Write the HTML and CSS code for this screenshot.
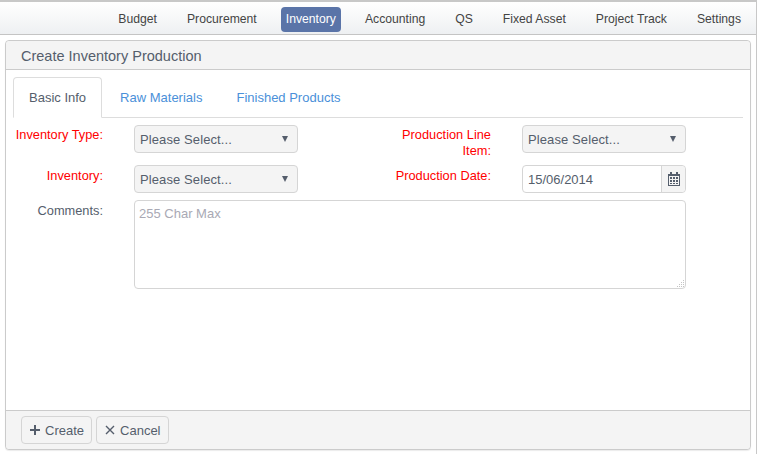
FILE: index.html
```html
<!DOCTYPE html>
<html lang="en">
<head>
  <meta charset="UTF-8">
  <title>Create Inventory Production</title>
  <link rel="stylesheet" href="styles.css">
</head>
<body>
  <nav class="topnav">
    <a href="#">Budget</a>
    <a href="#">Procurement</a>
    <a href="#" class="active">Inventory</a>
    <a href="#">Accounting</a>
    <a href="#">QS</a>
    <a href="#">Fixed Asset</a>
    <a href="#">Project Track</a>
    <a href="#">Settings</a>
  </nav>

  <section class="panel">
    <h1 class="panel-title">Create Inventory Production</h1>

    <div class="panel-body">
      <ul class="tabs">
        <li class="tab current">Basic Info</li>
        <li class="tab">Raw Materials</li>
        <li class="tab">Finished Products</li>
      </ul>

      <form class="fields">
        <label class="field-label required first">Inventory Type:</label>
        <div class="select"><span>Please Select...</span><i class="caret"></i></div>
        <label class="field-label required wide first">Production Line Item:</label>
        <div class="select"><span>Please Select...</span><i class="caret"></i></div>

        <label class="field-label required">Inventory:</label>
        <div class="select"><span>Please Select...</span><i class="caret"></i></div>
        <label class="field-label required wide">Production Date:</label>
        <div class="date">
          <span class="date-value">15/06/2014</span>
          <span class="date-btn">
            <svg width="12" height="14" viewBox="0 0 12 14">
              <path fill="#555e6c" fill-rule="evenodd" d="M2 0h2v2h4V0h2v2h2v12H0V2h2zM1 4v9h10V4zM2 5h2v2H2zm3 0h2v2H5zm3 0h2v2H8zM2 8h2v2H2zm3 0h2v2H5zm3 0h2v2H8zM2 11h2v1H2zm3 0h2v1H5zm3 0h2v1H8z"/>
            </svg>
          </span>
        </div>

        <label class="field-label comments">Comments:</label>
        <div class="textarea">
          255 Char Max
          <svg class="grip" width="8" height="8" viewBox="0 0 8 8">
            <path fill="#c4c4c4" d="M6 0h1v1H6zM4 2h1v1H4zM6 2h1v1H6zM2 4h1v1H2zM4 4h1v1H4zM6 4h1v1H6zM0 6h1v1H0zM2 6h1v1H2zM4 6h1v1H4zM6 6h1v1H6z"/>
          </svg>
        </div>
      </form>
    </div>

    <footer class="panel-footer">
      <button type="button" class="btn">
        <svg width="10" height="10" viewBox="0 0 10 10"><path fill="#555e6c" d="M4 0h2v4h4v2H6v4H4V6H0V4h4z"/></svg>
        Create
      </button>
      <button type="button" class="btn">
        <svg width="10" height="10" viewBox="0 0 10 10"><path stroke="#555e6c" stroke-width="1.400" fill="none" d="M1 1l8 8M9 1l-8 8"/></svg>
        Cancel
      </button>
    </footer>
  </section>
</body>
</html>
```

FILE: styles.css
```css
* {
  box-sizing: border-box;
}

html,
body {
  height: 100%;
}

body {
  margin: 0;
  font-family: "Liberation Sans", Arial, sans-serif;
  font-size: 13px;
  color: #555e6c;
  background-color: #fff;
  border-right: 1px solid #c8c8c8;
  overflow: hidden;
}

.topnav {
  display: flex;
  justify-content: flex-end;
  align-items: center;
  height: 35px;
  padding: 3px 9px 0 0;
  font-size: 12.200px;
  background: linear-gradient(#fff, #eef0f2);
  border-top: 2px solid #c8c8c8;
  border-bottom: 1px solid #c4c4c4;
}

.topnav a {
  height: 25px;
  padding: 5px 6px;
  line-height: 15px;
  color: #444;
  text-decoration: none;
  border-radius: 4px;
}

.topnav a + a {
  margin-left: 18px;
}

.topnav a.active {
  padding: 5px;
  background-color: #5a74a8;
  color: #fff;
}

.panel {
  display: flex;
  flex-direction: column;
  height: 410px;
  margin: 5px 5px 0 5px;
  border: 1px solid #cbcbcb;
  border-radius: 4px;
  background-color: #fff;
  box-shadow: 0 1px 1px rgba(0,0,0,0.08);
}

.panel-title {
  margin: 0;
  height: 29px;
  padding: 1px 15px 0;
  font-size: 14.500px;
  font-weight: normal;
  line-height: 28px;
  background-color: #f4f4f4;
  border-bottom: 1px solid #cbcbcb;
  border-radius: 4px 4px 0 0;
}

.panel-body {
  flex: 1;
  padding: 7px 7px 0 7px;
}

.tabs {
  display: flex;
  margin: 0;
  padding: 0;
  height: 41px;
  list-style: none;
  border-bottom: 1px solid #ddd;
}

.tab {
  height: 41px;
  margin-right: 2px;
  padding: 0 15px;
  line-height: 40px;
  color: #4a90d9;
  border: 1px solid transparent;
  border-radius: 4px 4px 0 0;
}

.tab.current {
  color: #555e6c;
  background-color: #fff;
  border-color: #ddd;
  border-bottom-color: #fff;
}

.fields {
  display: grid;
  grid-template-columns: 91px 164px 164px 164px;
  grid-auto-rows: 28px;
  column-gap: 30px;
  row-gap: 12px;
  padding-top: 7px;
}

.field-label {
  height: 28px;
  padding: 3px 1px 0 0;
  font-size: 12.800px;
  text-align: right;
  line-height: 16px;
}

.field-label.first {
  padding-top: 2px;
}

.field-label.required {
  color: #f00;
}

.field-label.wide {
  padding-left: 60px;
}

.field-label.comments {
  margin-top: -5px;
}

.select,
.date-btn {
  background-color: #f4f4f4;
}

.select {
  display: flex;
  align-items: center;
  justify-content: space-between;
  height: 28px;
  padding: 0 9px 0 5px;
  letter-spacing: 0.100px;
  border: 1px solid #d5d5d5;
  border-radius: 4px;
}

.caret {
  width: 0;
  height: 0;
  border-left: 3.500px solid transparent;
  border-right: 3.500px solid transparent;
  border-top: 6px solid #555e6c;
}

.date {
  display: flex;
  height: 28px;
  border: 1px solid #d5d5d5;
  border-radius: 4px;
}

.date-value {
  flex: 1;
  padding-left: 5px;
  line-height: 28px;
}

.date-btn {
  display: flex;
  align-items: center;
  justify-content: center;
  width: 24px;
  border-left: 1px solid #d5d5d5;
  border-radius: 0 4px 4px 0;
}

.textarea {
  position: relative;
  grid-column: 2 / 5;
  height: 89px;
  margin-top: -5px;
  padding: 5px 4px;
  line-height: 16px;
  color: #a9a9b4;
  border: 1px solid #d5d5d5;
  border-radius: 4px;
}

.grip {
  position: absolute;
  right: 0;
  bottom: 0;
}

.panel-footer {
  display: flex;
  gap: 4px;
  height: 39px;
  padding: 5px 15px;
  background-color: #f4f4f4;
  border-top: 1px solid #cbcbcb;
  border-radius: 0 0 4px 4px;
}

.btn {
  display: flex;
  align-items: center;
  gap: 5px;
  height: 28px;
  padding: 0 7px 0 8px;
  font-family: inherit;
  font-size: 13px;
  color: #555e6c;
  background-color: #f4f4f4;
  border: 1px solid #d5d5d5;
  border-radius: 4px;
}
```
